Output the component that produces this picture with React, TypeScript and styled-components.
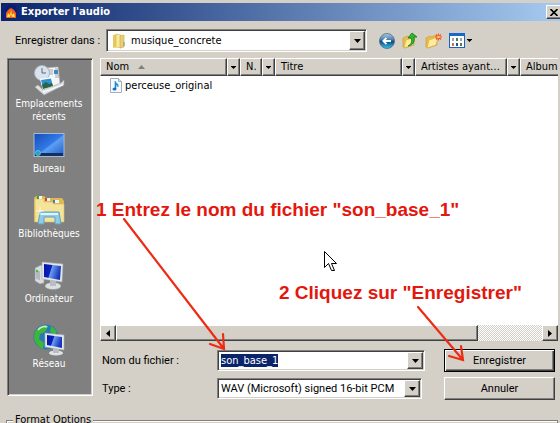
import React, { useEffect, useRef } from "react";
import styled, { createGlobalStyle, css } from "styled-components";

const face = "#d4d0c8";
const tahoma = `"DejaVu Sans Condensed", "DejaVu Sans", sans-serif`;
const shell = `Roboto, "Liberation Sans", sans-serif`;

const GlobalStyle = createGlobalStyle`
  * { box-sizing: border-box; }
  body { margin: 0; overflow: hidden; background: ${face}; color: #000; font: 11px/14px ${shell}; }
  button, input, select { font: inherit; color: inherit; margin: 0; padding: 0; border-radius: 0; }
`;

const raised = css`
  background: ${face};
  border: 1px solid;
  border-color: #fff #404040 #404040 #fff;
  box-shadow: inset -1px -1px #808080;
`;

const Dialog = styled.div`
  position: relative;
  height: 100vh;
  overflow: hidden;
  padding-top: 3px;
  background: ${face};
`;

const TitleBar = styled.header`
  display: flex;
  align-items: center;
  gap: 3px;
  height: 18px;
  margin-left: 1px;
  padding-left: 3px;
  background: linear-gradient(90deg, #0a246a, #a6caf0);
`;

const Title = styled.h1`
  flex: 1;
  margin: 0;
  color: #fff;
  font: bold 11px/18px ${tahoma};
`;

const CloseButton = styled.button`
  ${raised}
  display: grid;
  place-items: center;
  width: 16px;
  height: 14px;
  margin-right: -2px;
`;

const LookIn = styled.div`
  display: flex;
  align-items: center;
  gap: 12px;
  height: 37px;
  padding: 2px 88px 0 15px;
`;

const LookLabel = styled.label`
  flex: none;
  width: 79px;
  white-space: nowrap;
`;

const Combo = styled.div<{ $tall?: boolean }>`
  display: flex;
  align-items: stretch;
  flex: 1;
  min-width: 0;
  height: ${(p) => (p.$tall ? 23 : 21)}px;
  padding: 1px;
  background: #fff;
  border: 1px solid;
  border-color: #808080 #fff #fff #808080;
  box-shadow: inset 1px 1px #404040, inset -1px -1px ${face};
`;

const FolderSlot = styled.span`
  display: grid;
  place-items: center;
  flex: none;
  width: 22px;
`;

const selectBase = css`
  flex: 1;
  min-width: 0;
  border: 0;
  outline: 0;
  background: transparent;
  appearance: none;
`;

const FolderSelect = styled.select`
  ${selectBase}
  padding-left: 1px;
  font: 11px/17px ${tahoma};
`;

const TypeSelect = styled.select`
  ${selectBase}
  padding-left: 2px;
`;

const NameInput = styled.input`
  flex: 1;
  min-width: 0;
  height: 13px;
  align-self: center;
  margin-left: 2px;
  border: 0;
  outline: 0;
  background: transparent;
  font: 11px/13px ${tahoma};
  &::selection { background: #0a246a; color: #fff; }
`;

const DropFace = styled.span`
  ${raised}
  display: grid;
  place-items: center;
  flex: none;
  width: 16px;
  pointer-events: none;
`;

const Tools = styled.nav`
  display: flex;
  align-items: center;
  gap: 7px;
`;

const ToolButton = styled.button`
  display: flex;
  align-items: center;
  gap: 2px;
  height: 18px;
  border: 0;
  background: transparent;
`;

const Body = styled.div`
  display: flex;
  gap: 7px;
  padding: 0 2px 0 7px;
`;

const Places = styled.nav`
  display: flex;
  flex-direction: column;
  flex: none;
  width: 86px;
  height: 338px;
  padding-top: 5px;
  background: #808080;
  border: 1px solid;
  border-color: #808080 #fff #fff #808080;
  box-shadow: inset 1px 1px #404040, inset -1px -1px ${face};
`;

const Place = styled.button`
  display: flex;
  flex-direction: column;
  align-items: center;
  justify-content: flex-start;
  height: 65px;
  padding-right: 2px;
  border: 0;
  background: transparent;
  color: #fff;
  font: 10px/13px ${tahoma};
  svg { margin-bottom: 1px; }
`;

const Right = styled.div`
  flex: 1;
  min-width: 0;
`;

const FileList = styled.section`
  display: flex;
  flex-direction: column;
  height: 283px;
  overflow: hidden;
  background: #fff;
`;

const FileTable = styled.table`
  width: 100%;
  table-layout: fixed;
  border-collapse: collapse;
  font: 11px/14px ${tahoma};
  td, th { padding: 0; font-weight: normal; text-align: left; }
  td { height: 19px; }
`;

const Col = styled.col<{ $w?: number }>`
  width: ${(p) => (p.$w ? `${p.$w}px` : "auto")};
`;

const HeadCell = styled.div`
  display: flex;
  height: 18px;
`;

const HeadLabel = styled.span<{ $last?: boolean }>`
  ${raised}
  display: flex;
  align-items: center;
  gap: 9px;
  flex: 1;
  min-width: 0;
  overflow: hidden;
  padding-left: 5px;
  white-space: nowrap;
  ${(p) => p.$last && "border-right: 0; box-shadow: inset 0 -1px #808080;"}
`;

const HeadDrop = styled.button`
  ${raised}
  display: grid;
  place-items: center;
  width: 13px;
`;

const FileName = styled.span`
  display: flex;
  align-items: center;
  gap: 3px;
  padding-left: 10px;
`;

const ScrollBar = styled.div`
  display: flex;
  height: 16px;
  margin-top: auto;
  background: repeating-conic-gradient(#fff 0 25%, ${face} 0 50%) 0 0 / 2px 2px;
`;

const ScrollButton = styled.button`
  ${raised}
  display: grid;
  place-items: center;
  flex: none;
  width: 16px;
`;

const ScrollTrack = styled.div`
  flex: 1;
`;

const Thumb = styled.div`
  ${raised}
  width: 85%;
  height: 16px;
`;

const Form = styled.form`
  display: grid;
  grid-template-columns: 115px 1fr 111px;
  row-gap: 5px;
  align-items: center;
  padding: 8px 3px 0 2px;
`;

const Field = styled.div<{ $inset?: boolean }>`
  display: flex;
  margin-right: ${(p) => (p.$inset ? 22 : 19)}px;
`;

const PushButton = styled.button<{ $primary?: boolean }>`
  ${raised}
  height: 23px;
  ${(p) =>
    p.$primary &&
    css`
      border-color: #000;
      box-shadow: inset 1px 1px #fff, inset -1px -1px #404040, inset -2px -2px #808080;
    `}
`;

const Options = styled.fieldset`
  height: 60px;
  margin: 13px 2px 0 6px;
  padding: 0 6px;
  border: 1px solid #808080;
  box-shadow: inset 1px 1px #fff;
  legend { padding: 0 2px; background: ${face}; font: 11px/14px ${tahoma}; }
`;

const Overlay = styled.div`
  position: absolute;
  inset: 0;
  pointer-events: none;
`;

const Note = styled.p<{ $x: number; $y: number }>`
  position: absolute;
  left: ${(p) => p.$x}px;
  top: ${(p) => p.$y}px;
  margin: 0;
  color: #e3170d;
  font: bold 19px/22px "Liberation Sans", Arial, sans-serif;
  white-space: nowrap;
`;

const Marks = styled.svg`
  position: absolute;
  left: 0;
  top: 0;
`;

const Caret = () => (
  <svg width="7" height="4" viewBox="0 0 7 4"><path d="M0 0h7L3.500 4z" /></svg>
);

const SmallCaret = () => (
  <svg width="5" height="3" viewBox="0 0 5 3"><path d="M0 0h5v.5L2.500 3 0 .5z" /></svg>
);

const AudacityIcon = () => (
  <svg width="14" height="14" viewBox="0 0 14 14">
    <path d="M2 9V6a5 5 0 0 1 10 0v3" fill="none" stroke="#10157c" strokeWidth="2" />
    <rect x="0" y="6" width="3" height="7" rx="1.500" fill="#151a92" />
    <rect x="11" y="6" width="3" height="7" rx="1.500" fill="#151a92" />
    <path d="M2 13V8l2-3 3-2 3 2 2 3v5z" fill="#f0601b" />
    <path d="M3 12l1-4 2 2 1-5 1 5 2-2 1 4z" fill="#ffe34a" />
    <path d="M6 12l1-3 1 3z" fill="#f0601b" />
  </svg>
);

const FolderIcon = () => (
  <svg width="14" height="16" viewBox="0 0 14 16">
    <path d="M1 2l5-1v13l-5 1z" fill="#e8c95c" />
    <path d="M4 1l5 1v13l-5-1z" fill="#f8e9a2" stroke="#d8b850" strokeWidth=".6" />
    <path d="M8 3l4-1v12l-4 1z" fill="#ebcf6c" stroke="#c9a945" strokeWidth=".6" />
    <path d="M12 9v4" stroke="#5c9bb8" />
  </svg>
);

const BackIcon = () => (
  <svg width="16" height="16" viewBox="0 0 16 16">
    <defs>
      <linearGradient id="back" x2="0" y2="1"><stop stopColor="#b5cbdc" /><stop offset=".45" stopColor="#3b78ac" /><stop offset=".5" stopColor="#0d437c" /><stop offset="1" stopColor="#33c7ec" /></linearGradient>
    </defs>
    <circle cx="8" cy="8" r="7.500" fill="url(#back)" stroke="#496b8b" strokeWidth=".8" />
    <path d="M12 8H4.500M7.500 4.800L4.300 8l3.200 3.200" fill="none" stroke="#fff" strokeWidth="1.800" />
  </svg>
);

const openFolder = (
  <>
    <path d="M1 6l4-2 1 1 6-2v10l-9 3-2-1z" fill="#e6bd4e" stroke="#c79c31" strokeWidth=".6" />
    <path d="M4 8l9-3-2 8-9 3z" fill="#ffeb9b" stroke="#d3ac43" strokeWidth=".6" />
  </>
);

const UpIcon = () => (
  <svg width="16" height="18" viewBox="0 0 16 18">
    {openFolder}
    <path d="M6 14c4-2 4-5 3-8H6l4-5 5 4h-3c1 5-1 8-6 9z" fill="#31b52b" stroke="#137a19" strokeWidth=".8" />
  </svg>
);

const NewFolderIcon = () => (
  <svg width="17" height="17" viewBox="0 0 17 17">
    {openFolder}
    <path d="M13.500 1.500v7M10 5h7M11 2.500l5 5M16 2.500l-5 5" stroke="#f0512b" strokeWidth="1.100" />
    <circle cx="13.500" cy="5" r="1.300" fill="#ffd36a" />
  </svg>
);

const ViewIcon = () => (
  <svg width="16" height="15" viewBox="0 0 16 15">
    <rect x=".5" y=".5" width="15" height="14" fill="#fff" stroke="#1a62bd" />
    <path d="M0 0h16v3H0z" fill="#1767cd" />
    <path d="M3 5h2v3H3zM11 5h2v3h-2z" fill="#9aa6ad" />
    <path d="M7 5h2v3H7zM11 10h2v3h-2z" fill="#4c7c5b" />
    <path d="M3 10h2v3H3z" fill="#d06d58" />
    <path d="M7 10h2v3H7z" fill="#2c4ea0" />
  </svg>
);

const NoteIcon = () => (
  <svg width="12" height="15" viewBox="0 0 12 15">
    <path d="M.5.500h8l3 3v11H.5z" fill="#f7fafd" stroke="#a5aeb8" />
    <path d="M8.500.500v3h3" fill="#dde5ec" stroke="#a5aeb8" />
    <path d="M5 3c1 3 4 2 3 6-.5-2-1-2-2-2v4H5z" fill="#1689d3" stroke="#1689d3" strokeWidth=".6" />
    <ellipse cx="4.500" cy="11" rx="2" ry="1.500" fill="#1472c5" />
  </svg>
);

const screenGradient = (id: string) => (
  <defs>
    <linearGradient id={id} x2="1" y2=".3"><stop stopColor="#0712a1" /><stop offset=".45" stopColor="#0b22bc" /><stop offset=".5" stopColor="#6c9cf0" /><stop offset="1" stopColor="#1736be" /></linearGradient>
  </defs>
);

const RecentIcon = () => (
  <svg width="32" height="32" viewBox="0 0 32 32">
    <path d="M14 4l11-1 2 18-12 1z" fill="#f3f5f7" stroke="#c1c7cc" strokeWidth=".5" />
    <path d="M16 6h4M16 8h4M16 10h4M22 5h3M22 11h4M22 13h4" stroke="#9da9b4" />
    <path d="M21 6h4v4h-4z" fill="#4389b5" />
    <circle cx="9" cy="9" r="7.500" fill="#dae3eb" stroke="#a9b6c2" />
    <path d="M9 4v5h4" fill="none" stroke="#5a6d80" />
    <path d="M7 15l12-2 3 11-12 3z" fill="#fff" />
    <path d="M8 16l10-1.500 2 8-10 2z" fill="#2f91cf" />
    <path d="M9 21l4-3 3 2 3-1 1 3-10 3z" fill="#2b6545" />
    <path d="M2 23l3-2 5 5 18-7 3-3v5L11 31z" fill="#dfe2e5" stroke="#a4a8ad" strokeWidth=".6" />
    <path d="M10 28l20-7" stroke="#fff" />
  </svg>
);

const DesktopIcon = () => (
  <svg width="32" height="32" viewBox="0 0 32 32">
    <defs><linearGradient id="desk" x2="1" y2="1"><stop stopColor="#164bb8" /><stop offset=".5" stopColor="#3179e6" /><stop offset=".55" stopColor="#5c9ff2" /><stop offset="1" stopColor="#1d59c9" /></linearGradient></defs>
    <rect x="1" y="4.500" width="30" height="23" fill="url(#desk)" stroke="#a5bbd2" />
    <path d="M2 24h28v3H2z" fill="#162f5e" />
    <circle cx="5" cy="24" r="2.500" fill="#24a6b5" stroke="#8fd8df" strokeWidth=".6" />
  </svg>
);

const LibraryIcon = () => (
  <svg width="32" height="32" viewBox="0 0 32 32">
    <path d="M1 4l2-2h8l2 2h16l2 3v21H1z" fill="#dcb957" />
    <path d="M2 5h9v3h9v2h11v18H2z" fill="#f6e39a" stroke="#dcbd62" strokeWidth=".6" />
    <path d="M4 2h5v3H4z" fill="#39a23b" /><path d="M12 4h5v3h-5z" fill="#d14b30" /><path d="M20 6h6v3h-6z" fill="#3c83c0" />
    <path d="M6 2h3v3H6zM14 4h3v3h-3zM22 6h4v3h-4z" fill="#f4f4ec" />
    <path d="M7 18h19l2 12h-6v-7H11v7H5z" fill="#91cbe5" stroke="#5ba0c5" />
    <path d="M8 20h17" stroke="#dcf5ff" strokeWidth="2" />
    <path d="M7 13v8M3 17h8" stroke="#fff" strokeWidth=".8" />
  </svg>
);

const ComputerIcon = () => (
  <svg width="32" height="32" viewBox="0 0 32 32">
    {screenGradient("pc")}
    <path d="M2 9l6-3 3 2v16l-4 1-5-3z" fill="#d9dcdf" stroke="#8f979f" strokeWidth=".6" />
    <path d="M4 12v8M6 12v9" stroke="#8e969c" /><circle cx="4" cy="12" r="1.200" fill="#2ec833" />
    <ellipse cx="20" cy="27" rx="8" ry="3.500" fill="#dde0e3" stroke="#999" strokeWidth=".5" />
    <path d="M17 20h6v7h-6z" fill="#b9bec4" />
    <path d="M9 3l21 2-1 18-20-3z" fill="#e4e8eb" stroke="#a9afb5" strokeWidth=".6" />
    <path d="M11 5l17 2-1 14-16-3z" fill="url(#pc)" />
  </svg>
);

const NetworkIcon = () => (
  <svg width="32" height="32" viewBox="0 0 32 32">
    {screenGradient("net")}
    <circle cx="13" cy="13" r="12.500" fill="#2879b7" />
    <path d="M2 8C7 1 13 1 15 3l-3 5-5 2-1 5 5 4-1 6C4 23-1 16 2 8zM18 2l6 5-2 4-5-3z" fill="#3eb63a" />
    <path d="M5 6c3-4 8-4 9-3" stroke="#b9ecbe" strokeWidth="2" fill="none" />
    <ellipse cx="23" cy="29" rx="7" ry="2.500" fill="#e0e3e6" />
    <path d="M20 24h6v5h-6z" fill="#b9bec4" />
    <path d="M12 9l19 2v15l-19-3z" fill="#e4e8eb" stroke="#a9afb5" strokeWidth=".6" />
    <path d="M14 11l15 2v11l-15-3z" fill="url(#net)" />
  </svg>
);

const places = [
  { label: <>Emplacements<br />récents</>, Icon: RecentIcon },
  { label: "Bureau", Icon: DesktopIcon },
  { label: "Bibliothèques", Icon: LibraryIcon },
  { label: "Ordinateur", Icon: ComputerIcon },
  { label: "Réseau", Icon: NetworkIcon },
];

const columns = [
  { name: "Nom", width: 140, sorted: true },
  { name: "N.", width: 35 },
  { name: "Titre", width: 140 },
  { name: "Artistes ayant…", width: 105 },
  { name: "Album" },
];

export default function App() {
  const nameRef = useRef<HTMLInputElement>(null);
  useEffect(() => {
    nameRef.current?.focus();
    nameRef.current?.select();
  }, []);

  return (
    <Dialog>
      <GlobalStyle />
      <TitleBar>
        <AudacityIcon />
        <Title>Exporter l'audio</Title>
        <CloseButton aria-label="Fermer">
          <svg width="8" height="7" viewBox="0 0 8 7"><path d="M.5 0l7 7M7.500 0l-7 7" stroke="#000" strokeWidth="1.600" /></svg>
        </CloseButton>
      </TitleBar>

      <LookIn>
        <LookLabel htmlFor="folder">Enregistrer dans :</LookLabel>
        <Combo $tall>
          <FolderSlot><FolderIcon /></FolderSlot>
          <FolderSelect id="folder"><option>musique_concrete</option></FolderSelect>
          <DropFace><Caret /></DropFace>
        </Combo>
        <Tools>
          <ToolButton aria-label="Précédent"><BackIcon /></ToolButton>
          <ToolButton aria-label="Dossier parent"><UpIcon /></ToolButton>
          <ToolButton aria-label="Nouveau dossier"><NewFolderIcon /></ToolButton>
          <ToolButton aria-label="Affichage"><ViewIcon /><SmallCaret /></ToolButton>
        </Tools>
      </LookIn>

      <Body>
        <Places>
          {places.map(({ label, Icon }, i) => (
            <Place key={i}><Icon /><span>{label}</span></Place>
          ))}
        </Places>
        <Right>
          <FileList>
            <FileTable>
              <colgroup>{columns.map((c) => <Col key={c.name} $w={c.width} />)}</colgroup>
              <thead>
                <tr>
                  {columns.map((c) => (
                    <th key={c.name}>
                      <HeadCell>
                        <HeadLabel $last={!c.width}>
                          {c.name}
                          {c.sorted && <svg width="7" height="4" viewBox="0 0 7 4"><path d="M0 4h7L3.500 0z" fill="#808080" /></svg>}
                        </HeadLabel>
                        {c.width && <HeadDrop aria-label={`Filtrer ${c.name}`}><SmallCaret /></HeadDrop>}
                      </HeadCell>
                    </th>
                  ))}
                </tr>
              </thead>
              <tbody>
                <tr><td colSpan={5}><FileName><NoteIcon />perceuse_original</FileName></td></tr>
              </tbody>
            </FileTable>
            <ScrollBar>
              <ScrollButton aria-label="Défiler à gauche"><svg width="4" height="7" viewBox="0 0 4 7"><path d="M4 0v7L0 3.500z" /></svg></ScrollButton>
              <ScrollTrack><Thumb /></ScrollTrack>
              <ScrollButton aria-label="Défiler à droite"><svg width="4" height="7" viewBox="0 0 4 7"><path d="M0 0v7l4-3.500z" /></svg></ScrollButton>
            </ScrollBar>
          </FileList>
          <Form onSubmit={(e) => e.preventDefault()}>
            <label htmlFor="name">Nom du fichier :</label>
            <Field>
              <Combo>
                <NameInput id="name" ref={nameRef} defaultValue="son_base_1" />
                <DropFace><Caret /></DropFace>
              </Combo>
            </Field>
            <PushButton $primary type="submit">Enregistrer</PushButton>
            <label htmlFor="type">Type :</label>
            <Field $inset>
              <Combo>
                <TypeSelect id="type"><option>WAV (Microsoft) signed 16-bit PCM</option></TypeSelect>
                <DropFace><Caret /></DropFace>
              </Combo>
            </Field>
            <PushButton type="button">Annuler</PushButton>
          </Form>
        </Right>
      </Body>

      <Options><legend>Format Options</legend></Options>

      <Overlay>
        <Marks width="560" height="423" viewBox="0 0 560 423">
          <g fill="none" stroke="#ee2c14" strokeWidth="2.200" strokeLinecap="round">
            <path d="M124 219L224 349M210 344L224 349L223 334" />
            <path d="M418 307L463 360M449 356L463 360L461 346" />
          </g>
          <path d="M324.500 251.500v16l4-4 3 7h3l-3-7h5z" fill="#fff" stroke="#000" />
        </Marks>
        <Note $x={96} $y={199}>1 Entrez le nom du fichier "son_base_1"</Note>
        <Note $x={279} $y={282}>2 Cliquez sur "Enregistrer"</Note>
      </Overlay>
    </Dialog>
  );
}
